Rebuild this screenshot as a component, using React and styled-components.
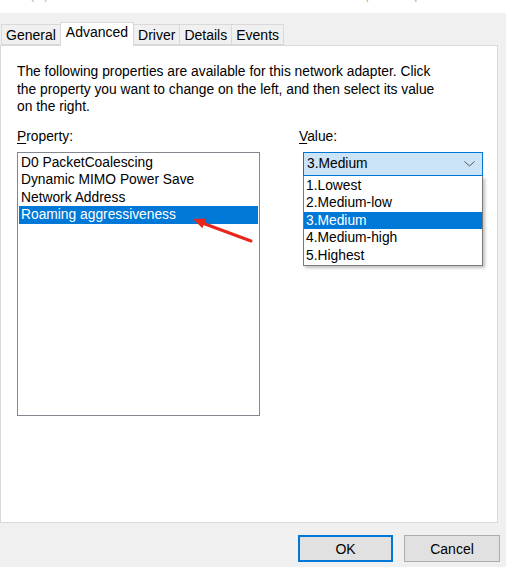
import React from "react";
import styled, { createGlobalStyle } from "styled-components";

const GlobalStyle = createGlobalStyle`
  html, body {
    margin: 0;
    padding: 0;
    background: #f0f0f0;
    font-family: "Liberation Sans", Arial, sans-serif;
    font-size: 13.8px;
    color: #000;
  }
`;

const Window = styled.div`
  width: 506px;
  height: 567px;
  display: flex;
  flex-direction: column;
  background: #f0f0f0;
  overflow: hidden;
`;

const TitleStrip = styled.div`
  height: 13px;
  background: #fff;
  overflow: hidden;
  white-space: nowrap;
  span {
    display: block;
    margin-top: -13px;
    padding-left: 4px;
    color: #b5b5b5;
    font-size: 13.6px;
    line-height: 16px;
  }
`;

const TabBar = styled.div`
  display: flex;
  align-items: flex-end;
  padding: 9px 0 0 2px;
  height: 23px;
`;

const Tab = styled.div`
  box-sizing: border-box;
  height: ${(p) => (p.$active ? "24px" : "21px")};
  padding: 0 ${(p) => (p.$active ? "5px" : "4px")};
  margin-left: -1px;
  margin-bottom: ${(p) => (p.$active ? "-1px" : "0")};
  border: 1px solid #d9d9d9;
  border-bottom: ${(p) => (p.$active ? "none" : "1px solid #d9d9d9")};
  background: ${(p) => (p.$active ? "#fff" : "#f0f0f0")};
  font-size: 14px;
  line-height: ${(p) => (p.$active ? "19px" : "20px")};
  position: relative;
  z-index: ${(p) => (p.$active ? 1 : 0)};
`;

const Panel = styled.div`
  box-sizing: border-box;
  height: 478px;
  margin-right: 8px;
  background: #fff;
  border: 1px solid #d9d9d9;
  padding: 17px 16px 0 16px;
`;

const Description = styled.p`
  margin: 0;
  white-space: nowrap;
  line-height: 17.6px;
`;

const Columns = styled.div`
  display: grid;
  grid-template-columns: 243px 180px;
  column-gap: 39px;
  margin-top: 12px;
`;

const Column = styled.div`
  display: flex;
  flex-direction: column;
`;

const Label = styled.div`
  line-height: 18px;
  margin-bottom: 6px;
  u {
    text-decoration: underline;
    text-underline-offset: 2px;
  }
`;

const ListWrap = styled.div`
  position: relative;
`;

const ListBox = styled.div`
  box-sizing: border-box;
  height: 264px;
  border: 1px solid #828790;
  padding: 1px;
  background: #fff;
`;

const ListItem = styled.div`
  line-height: 17.5px;
  padding-left: 2px;
  background: ${(p) => (p.$selected ? "#0078d7" : "transparent")};
  color: ${(p) => (p.$selected ? "#fff" : "#000")};
`;

const ArrowMark = styled.svg`
  position: absolute;
  left: 0;
  top: 0;
  pointer-events: none;
`;

const ComboWrap = styled.div`
  position: relative;
  margin-left: 4px;
  width: 180px;
`;

const Combo = styled.div`
  box-sizing: border-box;
  height: 24px;
  border: 1px solid #0078d7;
  background: #cce4f7;
  display: flex;
  align-items: center;
  justify-content: space-between;
  padding: 0 7px 0 3px;
`;

const Dropdown = styled.div`
  position: absolute;
  left: 0;
  top: 24px;
  width: 180px;
  box-sizing: border-box;
  border: 1px solid #7a7a7a;
  border-top: none;
  padding: 1px 0 1px;
  background: #fff;
  box-shadow: 2px 2px 3px rgba(0, 0, 0, 0.25);
  z-index: 2;
`;

const Option = styled.div`
  line-height: 17.5px;
  padding-left: 2px;
  background: ${(p) => (p.$selected ? "#0078d7" : "transparent")};
  color: ${(p) => (p.$selected ? "#fff" : "#000")};
`;

const ButtonRow = styled.div`
  display: flex;
  justify-content: flex-end;
  gap: 11px;
  padding: 12px 6px 0 0;
`;

const Button = styled.div`
  box-sizing: border-box;
  width: ${(p) => (p.$wide ? "96px" : "95px")};
  height: 27px;
  background: #e1e1e1;
  border: ${(p) => (p.$default ? "2px solid #0078d7" : "1px solid #adadad")};
  display: flex;
  align-items: center;
  justify-content: center;
  font-size: 14px;
`;

const properties = [
  "D0 PacketCoalescing",
  "Dynamic MIMO Power Save",
  "Network Address",
  "Roaming aggressiveness",
];

const values = ["1.Lowest", "2.Medium-low", "3.Medium", "4.Medium-high", "5.Highest"];

const App = () => {
  return (
    <Window>
      <GlobalStyle />
      <TitleStrip>
        <span>Intel(R) Dual Band Wireless-AC 3165 Wireless Network Adapter Properties</span>
      </TitleStrip>
      <TabBar>
        <Tab>General</Tab>
        <Tab $active>Advanced</Tab>
        <Tab>Driver</Tab>
        <Tab>Details</Tab>
        <Tab>Events</Tab>
      </TabBar>
      <Panel>
        <Description>
          The following properties are available for this network adapter. Click
          <br />
          the property you want to change on the left, and then select its value
          <br />
          on the right.
        </Description>
        <Columns>
          <Column>
            <Label>
              <u>P</u>roperty:
            </Label>
            <ListWrap>
              <ListBox>
                {properties.map((p, i) => (
                  <ListItem key={p} $selected={i === 3}>
                    {p}
                  </ListItem>
                ))}
              </ListBox>
              <ArrowMark width="243" height="120" viewBox="0 0 243 120">
                <line x1="234" y1="89" x2="184" y2="70.5" stroke="#e8261c" strokeWidth="3" strokeLinecap="round" />
                <polygon points="176,67 185.4,76.2 189,66.6" fill="#e8261c" />
              </ArrowMark>
            </ListWrap>
          </Column>
          <Column>
            <Label>
              <u>V</u>alue:
            </Label>
            <ComboWrap>
              <Combo>
                <span>3.Medium</span>
                <svg width="11" height="6" viewBox="0 0 11 6">
                  <polyline points="0.5,0.5 5.5,5 10.5,0.5" fill="none" stroke="#555" strokeWidth="1" />
                </svg>
              </Combo>
              <Dropdown>
                {values.map((v, i) => (
                  <Option key={v} $selected={i === 2}>
                    {v}
                  </Option>
                ))}
              </Dropdown>
            </ComboWrap>
          </Column>
        </Columns>
      </Panel>
      <ButtonRow>
        <Button $default>OK</Button>
        <Button $wide>Cancel</Button>
      </ButtonRow>
    </Window>
  );
};

export default App;
